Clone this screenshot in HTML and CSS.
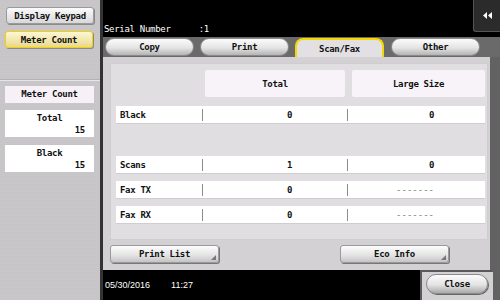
FILE: index.html
```html
<!DOCTYPE html>
<html lang="en">
  <head>
    <meta charset="UTF-8" />
    <meta name="viewport" content="width=device-width, initial-scale=1.0" />
    <title>Meter Count</title>
    <link rel="stylesheet" href="styles.css">
  </head>
  <body>
    <div class="screen">
      <aside class="sidebar">
        <button class="side-btn">Display Keypad</button>
        <button class="side-btn active">Meter Count</button>
        <div class="side-sep"></div>
        <div class="side-title">Meter Count</div>
        <div class="side-count"><span>Total</span><b>15</b></div>
        <div class="side-count"><span>Black</span><b>15</b></div>
      </aside>

      <div class="main">
        <header class="topbar">
          <div class="serial">Serial Number <span class="serial-no">:1</span></div>
          <button class="back">
            <svg width="9" height="7" viewBox="0 0 9 7"><path d="M4 0 L0 3.5 L4 7 Z M9 0 L5 3.5 L9 7 Z" fill="#fff"/></svg>
          </button>
        </header>

        <nav class="tabs">
          <button class="tab">Copy</button>
          <button class="tab">Print</button>
          <button class="tab current">Scan/Fax</button>
          <button class="tab">Other</button>
        </nav>

        <section class="content">
          <div class="card">
            <div class="head-row">
              <div></div>
              <div class="head">Total</div>
              <div class="head">Large Size</div>
            </div>
            <div class="row">
              <div class="label">Black</div>
              <div class="val">0</div>
              <div class="val large">0</div>
            </div>
            <div class="row gap">
              <div class="label">Scans</div>
              <div class="val">1</div>
              <div class="val large">0</div>
            </div>
            <div class="row">
              <div class="label">Fax TX</div>
              <div class="val">0</div>
              <div class="val large dash">-------</div>
            </div>
            <div class="row">
              <div class="label">Fax RX</div>
              <div class="val">0</div>
              <div class="val large dash">-------</div>
            </div>
          </div>
          <div class="actions">
            <button class="act">Print List</button>
            <button class="act eco">Eco Info</button>
          </div>
        </section>

        <footer class="footer">
          <div class="clock"><span>05/30/2016</span><span>11:27</span></div>
          <div class="close-cell"><button class="close">Close</button></div>
        </footer>
      </div>
    </div>
  </body>
</html>
```

FILE: styles.css
```css
* {
  margin: 0;
  padding: 0;
  box-sizing: border-box;
}

body {
  width: 500px;
  height: 300px;
  overflow: hidden;
  background: #000;
  font-family: "DejaVu Sans Mono", monospace;
  font-weight: bold;
  font-size: 9px;
  letter-spacing: -0.3px;
  color: #111;
}

button {
  font: inherit;
  letter-spacing: inherit;
  color: inherit;
  cursor: pointer;
}

.screen {
  display: flex;
  height: 300px;
}

/* left column */
.sidebar {
  width: 100px;
  height: 300px;
  background: #c9c7c9 repeating-linear-gradient(0deg, #c9c7c9 0, #c9c7c9 1px, #c6c4c6 1px, #c6c4c6 2px);
  display: flex;
  flex-direction: column;
  padding: 7px 6px 0 5px;
}

.side-btn {
  height: 17px;
  margin-left: 1px;
  border: 1px solid #9a9a9a;
  border-radius: 3px;
  background: linear-gradient(#fbfbfb, #d8d8d8);
  box-shadow: 1px 1px 0 #8a8a8a;
}

.side-btn.active {
  margin: 7px 1px 0 0;
  border: 1px solid #f2d200;
  background: linear-gradient(#fdf7d2, #e9d98e);
}

.side-sep {
  margin: 31px -6px 0 -5px;
  border-top: 1px solid #b4b2b4;
  border-bottom: 1px solid #e6e4e6;
}

.side-title {
  margin-top: 5px;
  height: 17px;
  line-height: 17px;
  text-align: center;
  background: #f7f1f7;
}

.side-count {
  margin-top: 7px;
  height: 27px;
  background: #fff;
  display: flex;
  flex-direction: column;
  padding: 3px 9px 0 0;
}

.side-count span {
  text-align: center;
  padding-left: 9px;
}

.side-count b {
  text-align: right;
  margin-top: 2px;
}

.side-count + .side-count {
  margin-top: 8px;
}

/* right part */
.main {
  flex: 1;
  display: flex;
  flex-direction: column;
  border-left: 3px solid #333;
  background: #626262;
}

.topbar {
  height: 37px;
  background: #000;
  color: #fff;
  font-weight: normal;
  display: flex;
  justify-content: space-between;
  align-items: flex-start;
}

.serial {
  margin: 24px 0 0 1px;
}

.serial-no {
  margin-left: 23px;
}

.back {
  width: 27px;
  height: 32px;
  background: #2b2b2b;
  border: 1px solid #555;
  border-top: 0;
  border-right: 0;
  border-radius: 0 0 0 3px;
  display: flex;
  align-items: center;
  justify-content: center;
}

.tabs {
  height: 20px;
  display: flex;
  gap: 6px;
  padding: 1px 0 0 2px;
  background: #6a6a6a;
}

.tab {
  width: 89px;
  height: 18px;
  border: 1px solid #8a8a8a;
  border-radius: 9px;
  background: linear-gradient(#fcfcfc, #e4e4e4 55%, #b4b4b4);
}

.tab.current {
  height: 20px;
  border: 2px solid #f4d800;
  border-bottom: 0;
  border-radius: 8px 8px 0 0;
  background: #e2e0e2;
}

.tab.current + .tab {
  margin-left: 1px;
}

.content {
  width: 387px;
  height: 213px;
  background: #d3d1d3;
  padding: 6px 2px 0 7px;
}

.card {
  height: 177px;
  background: #e0dee0;
  border: 1px solid #cfcdcf;
  padding: 6px 2px 0 5px;
}

.head-row,
.row {
  display: grid;
  grid-template-columns: 86px 145px 1fr;
}

.head-row {
  height: 27px;
}

.head {
  margin-left: 3px;
  background: #f8f3f8;
  border-radius: 2px;
  display: flex;
  align-items: center;
  justify-content: center;
}

.head + .head {
  margin-left: 5px;
}

.head-row .head:nth-child(2) {
  margin-right: 2px;
}

.row {
  height: 17px;
  margin-top: 8px;
  background: #fff;
  align-items: center;
  box-shadow: 0 1px 0 #cfcdcf;
}

.head-row + .row {
  margin-top: 9px;
}

.row.gap {
  margin-top: 33px;
}

.label {
  padding-left: 4px;
}

.val {
  height: 12px;
  line-height: 12px;
  border-left: 1px solid #8c8c8c;
  text-align: right;
  padding-right: 55px;
}

.val.large {
  padding-right: 51px;
}

.val.dash {
  color: #777;
  font-weight: normal;
  letter-spacing: 0;
}

.actions {
  display: flex;
  gap: 121px;
  margin-top: 5px;
}

.act {
  position: relative;
  width: 109px;
  height: 18px;
  border: 1px solid #9a9a9a;
  border-radius: 3px;
  background: linear-gradient(#fdfdfd, #e2e2e2 60%, #c4c4c4);
  box-shadow: 1px 1px 0 #777;
}

.act::after {
  content: "";
  position: absolute;
  right: 2px;
  bottom: 2px;
  border-left: 5px solid transparent;
  border-bottom: 5px solid #777;
}

.footer {
  height: 30px;
  display: flex;
}

.clock {
  width: 317px;
  background: #000;
  color: #fff;
  font-family: "Liberation Sans", sans-serif;
  font-weight: normal;
  font-size: 9px;
  letter-spacing: 0;
  display: flex;
  gap: 21px;
  padding: 10px 0 0 2px;
}

.close-cell {
  width: 73px;
  background: #d3d1d3;
  border-top: 2px solid #5a5a5a;
  padding: 2px 0 0 6px;
  box-shadow: inset 2px 0 0 #5a5a5a;
}

.close {
  width: 62px;
  height: 20px;
  border: 1px solid #8a8a8a;
  border-radius: 10px;
  background: linear-gradient(#fcfcfc, #e2e2e2 55%, #aaaaaa);
  box-shadow: 1px 1px 0 #666;
}
```
